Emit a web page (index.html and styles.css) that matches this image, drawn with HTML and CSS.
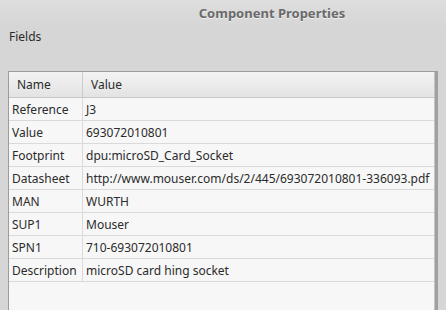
FILE: index.html
```html
<!DOCTYPE html>
<html>
<head>
<meta charset="utf-8">
<link rel="stylesheet" href="styles.css">
</head>
<body>
<div class="window">
  <div class="titlebar"><span class="title">Component Properties</span></div>
  <div class="fields-label">Fields</div>
  <div class="frame">
    <table class="grid">
      <thead>
        <tr><th class="c1">Name</th><th class="c2">Value</th></tr>
      </thead>
      <tbody>
        <tr><td class="c1">Reference</td><td class="c2">J3</td></tr>
        <tr><td class="c1">Value</td><td class="c2">693072010801</td></tr>
        <tr><td class="c1">Footprint</td><td class="c2">dpu:microSD_Card_Socket</td></tr>
        <tr><td class="c1">Datasheet</td><td class="c2">http://www.mouser.com/ds/2/445/693072010801-336093.pdf</td></tr>
        <tr><td class="c1">MAN</td><td class="c2">WURTH</td></tr>
        <tr><td class="c1">SUP1</td><td class="c2">Mouser</td></tr>
        <tr><td class="c1">SPN1</td><td class="c2">710-693072010801</td></tr>
        <tr><td class="c1">Description</td><td class="c2">microSD card hing socket</td></tr>
      </tbody>
    </table>
  </div>
</div>
</body>
</html>
```
FILE: styles.css
```css
html, body {
  margin: 0;
  padding: 0;
  background: #d6d6d6;
  overflow: hidden;
}
.window {
  width: 446px;
  height: 310px;
  font-family: "Noto Sans", "Open Sans", sans-serif;
  font-size: 12px;
  color: #2b2b2b;
  display: flex;
  flex-direction: column;
  overflow: hidden;
}
.titlebar {
  height: 26px;
  display: flex;
  justify-content: center;
  align-items: center;
  padding-left: 98px;
  background: linear-gradient(#dedede, #d6d6d6);
}
.title {
  font-weight: bold;
  font-size: 13px;
  color: #6a6a6a;
  text-shadow: 0 1px 0 #f0f0f0;
}
.fields-label {
  padding-left: 9px;
  height: 45px;
  line-height: 22px;
}
.frame {
  margin-left: 8px;
  width: 426px;
  flex: 1;
  background: #f7f7f7;
  border-left: 1px solid #9c9c9c;
  border-top: 1px solid #9c9c9c;
  border-right: 3px solid #a0a0a0;
  box-shadow: inset -1px 0 0 #c4c4c4;
}
.grid {
  border-collapse: collapse;
  width: 425px;
  table-layout: fixed;
}
.grid th {
  height: 25px;
  padding: 0 0 0 8px;
  text-align: left;
  font-weight: normal;
  background: linear-gradient(#f3f3f3, #e3e3e3);
  border-bottom: 1px solid #c6c6c6;
}
.grid th.c1 {
  width: 65px;
  border-right: 1px solid #cccccc;
}
.grid td {
  height: 22px;
  padding: 0 0 0 3px;
  border-bottom: 1px solid #dadada;
  white-space: nowrap;
}
.grid td.c1 {
  border-right: 1px solid #dadada;
}
```
